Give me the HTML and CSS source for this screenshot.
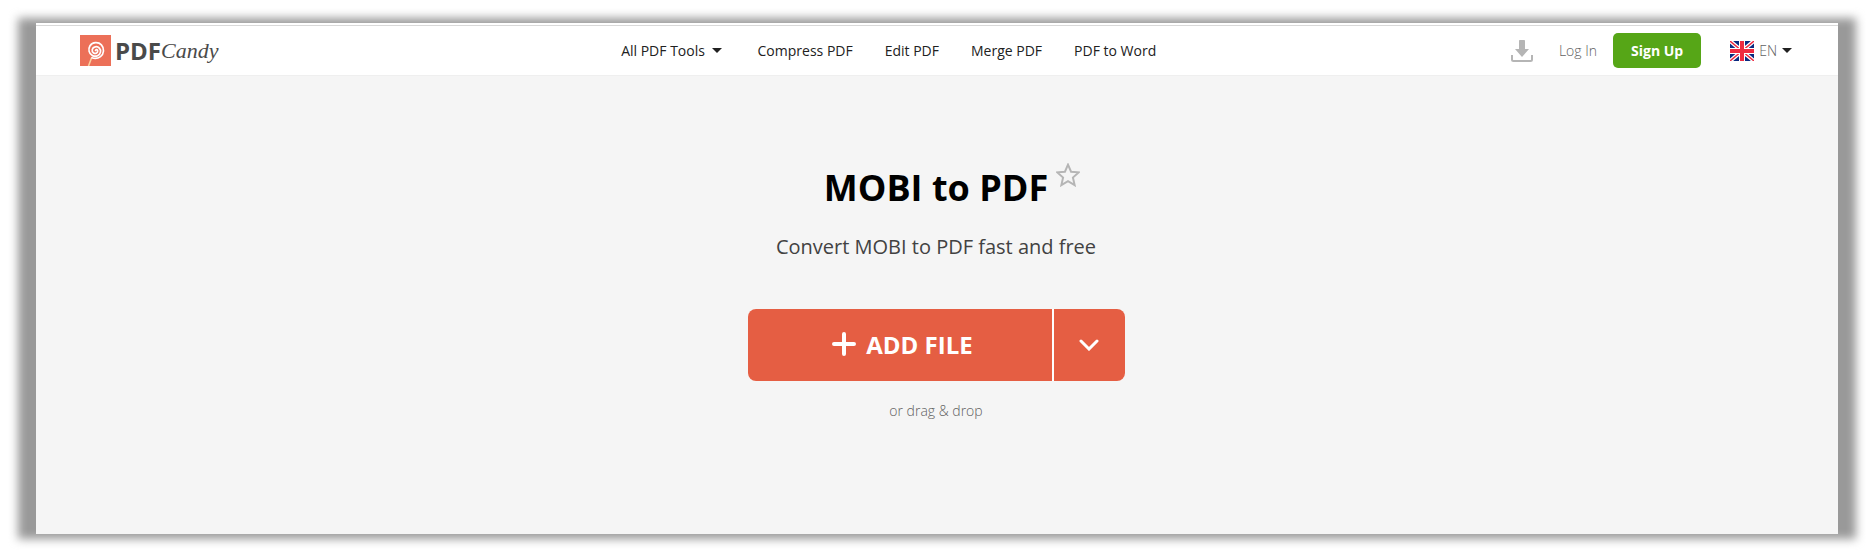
FILE: index.html
```html
<!DOCTYPE html>
<html lang="en">
<head>
    <meta charset="UTF-8">
    <meta name="viewport" content="width=device-width, initial-scale=1.0">
    <title>MOBI to PDF</title>
    <link rel="stylesheet" href="styles.css">
</head>
<body>
    <div class="page">
        <header class="header">
            <a class="logo" href="#">
                <svg class="logo-icon" viewBox="0 0 31 31" aria-hidden="true">
                    <rect width="31" height="31" fill="#ec7058"/>
                    <path d="M11.500 23L8.500 31" stroke="#fbd3a0" stroke-width="1.600" fill="none"/>
                    <path d="M15.500 16.500c.4-1.400 2.200-1 2.200.6 0 2-2.400 3-4.100 1.900-2.400-1.600-1.700-5.600 1.600-6.200 3.400-.6 5.900 2.300 5.300 5.300-.7 3.500-4.600 5-8 3.500-3.600-1.600-4.600-6.400-2.500-9.800 2.600-4 8.300-4.200 11.400-1 3.300 3.500 2.600 9.200-.9 11.800-2.400 1.800-5.800 2.200-8.600 1.200" transform="translate(0 -1)" fill="none" stroke="#fff" stroke-width="1.700" stroke-linecap="round"/>
                </svg>
                <span class="logo-pdf">PDF</span><span class="logo-candy">Candy</span>
            </a>

            <nav class="nav">
                <a href="#">All PDF Tools <span class="caret"></span></a>
                <a href="#">Compress PDF</a>
                <a href="#">Edit PDF</a>
                <a href="#">Merge PDF</a>
                <a href="#">PDF to Word</a>
            </nav>

            <!-- account and language -->
            <div class="account">
                <a class="download" href="#" aria-label="Downloads">
                    <svg width="22" height="22" viewBox="0 0 22 22">
                        <path d="M9 0h4c.6 0 1 .4 1 1v8h4l-7 8-7-8h4V1c0-.6.4-1 1-1z" fill="#b5b5b5"/>
                        <path d="M1 15v4.500c0 1 .5 1.500 1.500 1.500h17c1 0 1.500-.5 1.500-1.500V15" fill="none" stroke="#b5b5b5" stroke-width="2"/>
                    </svg>
                </a>
                <a class="login" href="#">Log In</a>
                <button class="signup" type="button">Sign Up</button>
                <button class="lang" type="button">
                    <svg width="24" height="20" viewBox="0 0 24 20" aria-hidden="true">
                        <rect width="24" height="20" fill="#0a2a80"/>
                        <path d="M0 0l24 20M24 0L0 20" stroke="#fff" stroke-width="4"/>
                        <path d="M0 0l24 20M24 0L0 20" stroke="#ee2a40" stroke-width="1.400"/>
                        <path d="M12 0v20M0 10h24" stroke="#fff" stroke-width="6"/>
                        <path d="M12 0v20M0 10h24" stroke="#ee2a40" stroke-width="4"/>
                    </svg>
                    <span>EN</span>
                    <span class="caret"></span>
                </button>
            </div>
        </header>

        <main class="main">
            <div class="title-row">
                <h1>MOBI to PDF</h1>
                <button class="star" type="button" aria-label="Add to favorites">
                    <svg width="24" height="24" viewBox="1 1 22 22">
                        <path d="M12 2.500l2.800 6.500 7 .6-5.300 4.700 1.600 7L12 17.600l-6.100 3.700 1.600-7L2.200 9.600l7-.6z" fill="none" stroke="#b5b5b5" stroke-width="1.800"/>
                    </svg>
                </button>
            </div>
            <p class="subtitle">Convert MOBI to PDF fast and free</p>

            <div class="upload">
                <button class="add-file" type="button">
                    <svg width="24" height="24" viewBox="0 0 24 24" aria-hidden="true">
                        <path d="M12 2v20M2 12h20" stroke="#fff" stroke-width="4" stroke-linecap="round"/>
                    </svg>
                    ADD FILE
                </button>
                <button class="more" type="button" aria-label="More sources">
                    <svg width="20" height="12" viewBox="0 0 20 12">
                        <path d="M2 2l8 8 8-8" fill="none" stroke="#fff" stroke-width="3" stroke-linecap="round"/>
                    </svg>
                </button>
            </div>
            <p class="drop">or drag &amp; drop</p>
        </main>
    </div>
</body>
</html>
```
FILE: styles.css
```css
* {
    box-sizing: border-box;
}
body {
    margin: 0;
    min-height: 100vh;
    display: flex;
    padding: 23px 38px 26px 36px;
    background: #fff;
    color: #212121;
    font-family: "Open Sans", sans-serif;
    font-size: 14px;
}
a {
    color: inherit;
    text-decoration: none;
}
button {
    border: none;
    padding: 0;
    background: none;
    font-family: inherit;
    font-size: inherit;
    cursor: pointer;
}
svg {
    display: block;
}
.page {
    position: relative;
    flex: 1;
    display: flex;
    flex-direction: column;
    background: #f5f5f5;
    border-top: 2px solid #fff;
}
/* shadow is wider on the sides than on top and bottom */
.page::before {
    content: "";
    position: absolute;
    z-index: -1;
    inset: -7px -18px -5px;
    background: #999;
    filter: blur(5px);
}

/* header */
.header {
    display: flex;
    align-items: center;
    height: 51px;
    padding: 0 46px 0 44px;
    background: #fff;
    border-top: 1px solid #d9d9d9;
    border-bottom: 1px solid #efefef;
}
.logo {
    display: flex;
    align-items: center;
    color: #4a4a4a;
    line-height: 32px;
}
.logo-icon {
    width: 31px;
    height: 31px;
    margin-right: 4px;
}
.logo-pdf {
    font-size: 24px;
    font-weight: 700;
}
.logo-candy {
    font-family: "Liberation Serif", serif;
    font-size: 22px;
    font-style: italic;
}
.nav {
    display: flex;
    gap: 32px;
    margin: 0 auto;
    padding-left: 48px;
}
.caret {
    display: inline-block;
    border: 5px solid transparent;
    border-top-color: #212121;
    border-bottom: none;
}
.nav .caret {
    margin: 0 4px 0 3px;
    vertical-align: 3px;
}
.account {
    display: flex;
    align-items: center;
    color: #616161;
    font-weight: 300;
}
.login {
    margin: 0 16px 0 26px;
}
.signup {
    height: 35px;
    padding: 0 18px;
    border-radius: 5px;
    background: #56a617;
    color: #fff;
    font-weight: 700;
}
.lang {
    display: flex;
    align-items: center;
    gap: 5px;
    margin-left: 29px;
    color: #616161;
    font-weight: 300;
}

/* main */
.main {
    flex: 1;
    display: flex;
    flex-direction: column;
    align-items: center;
    padding: 84px 2px 0 0;
}
.title-row {
    display: flex;
    align-items: flex-start;
    gap: 8px;
    padding-left: 32px;
}
h1 {
    margin: 0;
    color: #000;
    font-size: 36px;
    line-height: 56px;
}
.star {
    margin-top: 3px;
}
.subtitle {
    margin: 15px 0 0;
    color: #424242;
    font-size: 20px;
    line-height: 32px;
}
.upload {
    display: flex;
    gap: 2px;
    margin-top: 46px;
    border-radius: 8px;
    overflow: hidden;
    background: #fff;
}
.add-file {
    display: flex;
    align-items: center;
    justify-content: center;
    gap: 10px;
    width: 304px;
    height: 72px;
    padding: 0 0 2px 6px;
    background: #e55e43;
    color: #fff;
    font-size: 24px;
    font-weight: 700;
}
.more {
    display: flex;
    align-items: center;
    justify-content: center;
    width: 71px;
    background: #e55e43;
}
.drop {
    margin: 20px 0 0;
    color: #616161;
    font-weight: 300;
    line-height: 20px;
}
```
